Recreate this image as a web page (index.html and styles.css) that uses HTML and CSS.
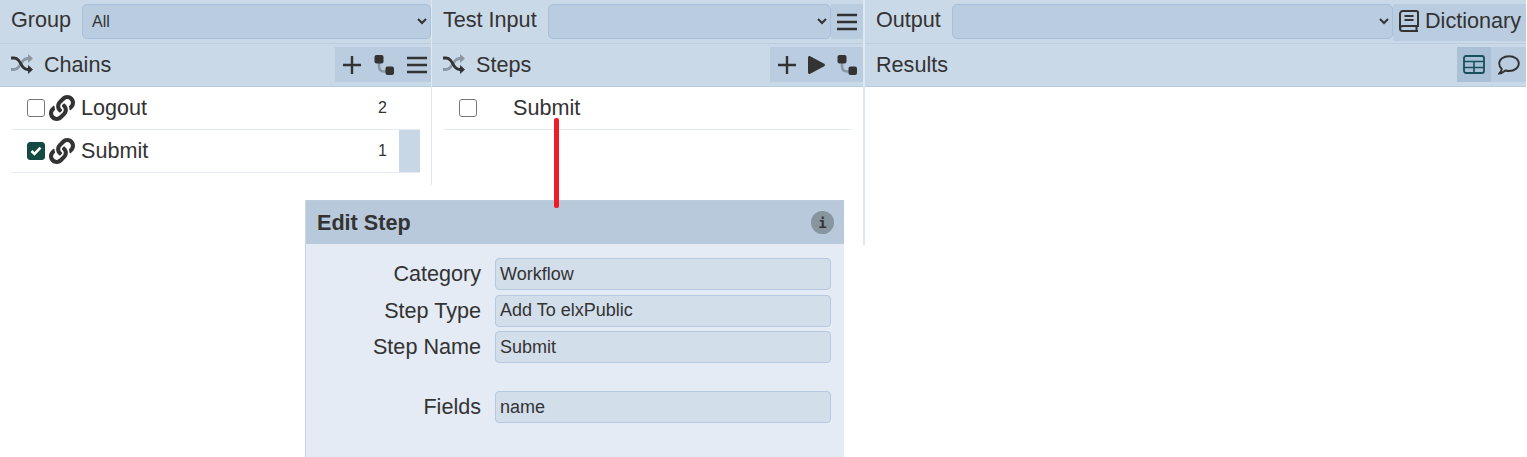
FILE: index.html
```html
<!DOCTYPE html>
<html lang="en">
<head>
<meta charset="utf-8">
<title>Chains</title>
<link rel="stylesheet" href="styles.css">
</head>
<body>
<svg class="defs" width="0" height="0" aria-hidden="true">
  <defs>
    <symbol id="shuffle" viewBox="0 0 22 20">
      <path d="M0 15.5h3.2c2 0 3.2-.8 4.4-2.3L12 6.8c1.2-1.5 2.4-2.3 4.4-2.3H18" fill="none" stroke="#8b98a3" stroke-width="2.8"/>
      <path d="M17 0l5 4.5-5 4.5z" fill="#8b98a3"/>
      <path d="M0 4h3.2c2 0 3.2.8 4.4 2.3l4.4 6.9c1.2 1.5 2.4 2.3 4.4 2.3H18" fill="none" stroke="#333" stroke-width="2.8"/>
      <path d="M17 11l5 4.5-5 4.5z" fill="#333"/>
    </symbol>
    <symbol id="link" viewBox="0 0 512 512">
      <path fill="#333" d="M326.612 185.391c59.747 59.809 58.927 155.698.36 214.59-.11.12-.24.25-.36.37l-67.2 67.2c-59.27 59.27-155.699 59.262-214.96 0-59.27-59.26-59.27-155.7 0-214.96l37.106-37.106c9.84-9.84 26.786-3.3 27.294 10.606.648 17.722 3.826 35.527 9.69 52.721 1.986 5.822.567 12.262-3.783 16.612l-13.087 13.087c-28.026 28.026-28.905 73.66-1.155 101.96 28.024 28.579 74.086 28.749 102.325.51l67.2-67.19c28.191-28.191 28.073-73.757 0-101.83-3.701-3.694-7.429-6.564-10.341-8.569a16.037 16.037 0 0 1-6.947-12.606c-.396-10.567 3.348-21.456 11.698-29.806l21.054-21.055c5.521-5.521 14.182-6.199 20.584-1.731a152.482 152.482 0 0 1 20.522 17.197zM467.547 44.449c-59.261-59.262-155.69-59.27-214.96 0l-67.2 67.2c-.12.12-.25.25-.36.37-58.566 58.892-59.387 154.781.36 214.59a152.454 152.454 0 0 0 20.521 17.196c6.402 4.468 15.064 3.789 20.584-1.731l21.054-21.055c8.35-8.35 12.094-19.239 11.698-29.806a16.037 16.037 0 0 0-6.947-12.606c-2.912-2.005-6.64-4.875-10.341-8.569-28.073-28.073-28.191-73.639 0-101.83l67.2-67.19c28.239-28.239 74.3-28.069 102.325.51 27.75 28.3 26.872 73.934-1.155 101.96l-13.087 13.087c-4.35 4.35-5.769 10.79-3.783 16.612 5.864 17.194 9.042 34.999 9.69 52.721.509 13.906 17.454 20.446 27.294 10.606l37.106-37.106c59.271-59.259 59.271-155.699.001-214.959z"/>
    </symbol>
    <symbol id="plus" viewBox="0 0 18 18">
      <path d="M9 0v18M0 9h18" stroke="#333" stroke-width="2.4" fill="none"/>
    </symbol>
    <symbol id="bars" viewBox="0 0 20 18">
      <path d="M0 2h20M0 9h20M0 16h20" stroke="#333" stroke-width="2.6" fill="none"/>
    </symbol>
    <symbol id="chain" viewBox="0 0 20 20">
      <path d="M5 8v3c0 4 2 5.500 5 5.500h4" fill="none" stroke="#8b98a3" stroke-width="2.6"/>
      <rect x="0.500" y="0" width="9" height="8.500" rx="2" fill="#333"/>
      <rect x="11.500" y="11.500" width="8.500" height="8.500" rx="2" fill="#333"/>
    </symbol>
    <symbol id="play" viewBox="0 0 17 18">
      <path d="M0 1.500C0 .3 1.200-.4 2.200.2l14 7.500c1 .6 1 2 0 2.600l-14 7.500C1.200 18.400 0 17.700 0 16.500z" fill="#333"/>
    </symbol>
  </defs>
</svg>

<main class="app">
  <section class="pane pane-chains">
    <div class="bar">
      <label class="bar-label">Group</label>
      <select class="picker"><option>All</option></select>
    </div>
    <div class="bar bar-sub">
      <svg class="ico-shuffle"><use href="#shuffle"/></svg>
      <span class="bar-title">Chains</span>
      <div class="tools">
        <svg class="ico-plus"><use href="#plus"/></svg>
        <svg class="ico-chain"><use href="#chain"/></svg>
        <svg class="ico-bars"><use href="#bars"/></svg>
      </div>
    </div>
    <ul class="rows">
      <li class="row">
        <span class="check"></span>
        <svg class="ico-link"><use href="#link"/></svg>
        <span class="row-name">Logout</span>
        <span class="count">2</span>
        <span class="mark"></span>
      </li>
      <li class="row">
        <span class="check check-on">
          <svg viewBox="0 0 12 10" width="12" height="10"><path d="M1.500 5l3 3 6-6.300" fill="none" stroke="#fff" stroke-width="2.600"/></svg>
        </span>
        <svg class="ico-link"><use href="#link"/></svg>
        <span class="row-name">Submit</span>
        <span class="count">1</span>
        <span class="mark mark-on"></span>
      </li>
    </ul>
  </section>

  <section class="pane pane-steps">
    <div class="bar">
      <label class="bar-label">Test Input</label>
      <select class="picker"><option></option></select>
      <span class="square"><svg class="ico-bars"><use href="#bars"/></svg></span>
    </div>
    <div class="bar bar-sub">
      <svg class="ico-shuffle"><use href="#shuffle"/></svg>
      <span class="bar-title">Steps</span>
      <div class="tools tools-steps">
        <svg class="ico-plus"><use href="#plus"/></svg>
        <svg class="ico-play"><use href="#play"/></svg>
        <svg class="ico-chain"><use href="#chain"/></svg>
      </div>
    </div>
    <ul class="rows">
      <li class="row row-step">
        <span class="check"></span>
        <span class="row-name">Submit</span>
      </li>
    </ul>
  </section>

  <section class="pane pane-output">
    <div class="bar">
      <label class="bar-label">Output</label>
      <select class="picker"><option></option></select>
      <span class="dict">
        <svg class="ico-book" viewBox="0 0 20 22">
          <path d="M3.800 1h13.400c1 0 1.800.8 1.800 1.800V16H3.800C2.300 16 1 17.200 1 18.500V3.800C1 2.300 2.300 1 3.800 1zM1 18.500C1 19.900 2.300 21 3.800 21H19M17.500 16v5" fill="none" stroke="#333" stroke-width="2"/>
          <path d="M5.500 6h9M5.500 10h9" stroke="#333" stroke-width="2"/>
        </svg>
        Dictionary
      </span>
    </div>
    <div class="bar bar-sub">
      <span class="bar-title bar-title-plain">Results</span>
      <div class="tools tools-results">
        <span class="tool-on">
          <svg class="ico-table" viewBox="0 0 22 19">
            <rect x="1" y="1" width="20" height="17" rx="2" fill="none" stroke="#17505a" stroke-width="1.800"/>
            <path d="M1 6.500h20M1 12.500h20M11 6.500V18" stroke="#17505a" stroke-width="1.600" fill="none"/>
          </svg>
        </span>
        <svg class="ico-comment" viewBox="0 0 22 20">
          <path d="M11 1.200c5.500 0 9.800 3.200 9.800 7.400S16.500 16 11 16c-1.300 0-2.500-.2-3.600-.5C6 16.700 3.800 18.300 1.300 18.500c1.300-1.300 2.300-3.200 2.500-4.500C2.100 12.600 1.200 10.700 1.200 8.600 1.200 4.400 5.500 1.200 11 1.200z" fill="none" stroke="#333" stroke-width="1.900"/>
        </svg>
      </div>
    </div>
  </section>
</main>

<div class="connector"></div>

<aside class="dialog">
  <header class="dialog-head">
    <h2 class="dialog-title">Edit Step</h2>
    <span class="info">i</span>
  </header>
  <form class="dialog-body">
    <label class="field-label">Category</label><input class="field" value="Workflow">
    <label class="field-label">Step Type</label><input class="field" value="Add To elxPublic">
    <label class="field-label">Step Name</label><input class="field" value="Submit">
    <label class="field-label field-gap">Fields</label><input class="field field-gap" value="name">
  </form>
</aside>
</body>
</html>
```
FILE: styles.css
```css
* { box-sizing: border-box; }
html, body { margin: 0; height: 457px; overflow: hidden; background: #fff; }
body { font-family: "Liberation Sans", Arial, sans-serif; font-size: 21.6px; color: #333; }
.defs { position: absolute; }
svg { display: block; flex: none; }

.app { display: flex; align-items: flex-start; padding-right: 1px; }
.pane { display: flex; flex-direction: column; }
.pane-chains { width: 432px; height: 185px; border-right: 1px solid #dfe7f0; }
.pane-steps { width: 433px; height: 245px; border-right: 2px solid #dfe7f0; }
.pane-output { flex: 1; }

.bar { display: flex; align-items: flex-start; height: 44px; background: #cad9e7; border-bottom: 1px solid #bccddf; padding-top: 4px; }
.bar-label { padding: 3px 11px 0; line-height: 26px; white-space: nowrap; }
.picker { flex: 1; min-width: 0; height: 35px; font: 16px "Liberation Sans", Arial, sans-serif; color: #333; background-color: #baccdf; border: 1px solid #a6c0dc; border-radius: 5px; padding: 0 5px; }
.square { width: 32px; height: 35px; background: #baccdf; display: flex; align-items: center; justify-content: center; }
.dict { display: flex; align-items: center; gap: 6px; width: 133px; height: 37px; padding: 0 0 4px 6px; background: #baccdf; white-space: nowrap; }

.bar-sub { height: 43px; border-bottom: 1px solid #b5cbe2; padding-top: 3px; }
.bar-title { line-height: 36px; margin-left: 11px; }
.bar-title-plain { margin-left: 11px; }
.ico-shuffle { width: 22px; height: 20px; margin: 7px 0 0 11px; }
.tools { margin-left: auto; height: 35px; width: 96px; background: #baccdf; display: flex; align-items: center; padding-left: 8px; }
.tools-steps { width: 93px; }
.tools-results { width: 69px; padding-left: 0; }
.ico-plus { width: 18px; height: 18px; }
.ico-chain { width: 20px; height: 20px; margin-left: 13px; }
.ico-bars { width: 20px; height: 18px; }
.tools .ico-bars { margin-left: 13px; }
.tools-steps .ico-play { width: 17px; height: 18px; margin-left: 12px; }
.tools-steps .ico-chain { margin-left: 12px; }
.tool-on { width: 34px; height: 35px; background: #a9c0d6; display: flex; align-items: center; justify-content: center; }
.ico-table { width: 22px; height: 19px; }
.ico-comment { width: 22px; height: 20px; margin-left: 7px; }
.ico-book { width: 20px; height: 22px; }

.rows { list-style: none; margin: 0; padding: 0 11px; }
.pane-steps .rows { padding-right: 10px; }
.row { display: flex; align-items: center; height: 43px; border-bottom: 1px solid #e6ebf1; }
.check { width: 18px; height: 18px; margin-left: 16px; border: 1px solid #767676; border-radius: 3px; background: #fff; display: flex; align-items: center; justify-content: center; flex: none; }
.check-on { background: #134a42; border-color: #134a42; }
.ico-link { width: 26px; height: 26px; margin-left: 4px; }
.row-name { margin-left: 6px; }
.row-step .row-name { margin-left: 36px; }
.count { margin-left: auto; font-size: 16px; width: 21px; text-align: center; margin-right: 6px; }
.mark { width: 21px; align-self: stretch; }
.mark-on { background: #c8d7e6; }

.connector { position: absolute; left: 554px; top: 118px; width: 5px; height: 90px; background: #ee1c25; border-radius: 2px; z-index: 2; }

.dialog { position: absolute; left: 305px; top: 200px; width: 539px; height: 257px; background: #e4ebf4; border-left: 1px solid #c9d6e4; }
.dialog-head { height: 44px; background: #b7c9da; border-top: 1px solid #bccbdc; display: flex; align-items: center; justify-content: space-between; padding: 0 10px 0 11px; }
.dialog-title { margin: 0; font-size: 21.6px; font-weight: 700; }
.info { width: 23px; height: 23px; border-radius: 50%; background: #87959f; color: #333; font: 700 14px "DejaVu Sans Mono", monospace; display: flex; align-items: center; justify-content: center; }
.dialog-body { display: grid; grid-template-columns: 175px 336px; column-gap: 14px; row-gap: 4.500px; padding-top: 14px; }
.field-label { text-align: right; line-height: 32px; }
.field { height: 32px; width: 336px; padding: 0 4px; font: 18px "Liberation Sans", Arial, sans-serif; color: #333; background: #d2deea; border: 1px solid #b5c9e0; border-radius: 4px; }
.field-gap { margin-top: 23.500px; }
```
